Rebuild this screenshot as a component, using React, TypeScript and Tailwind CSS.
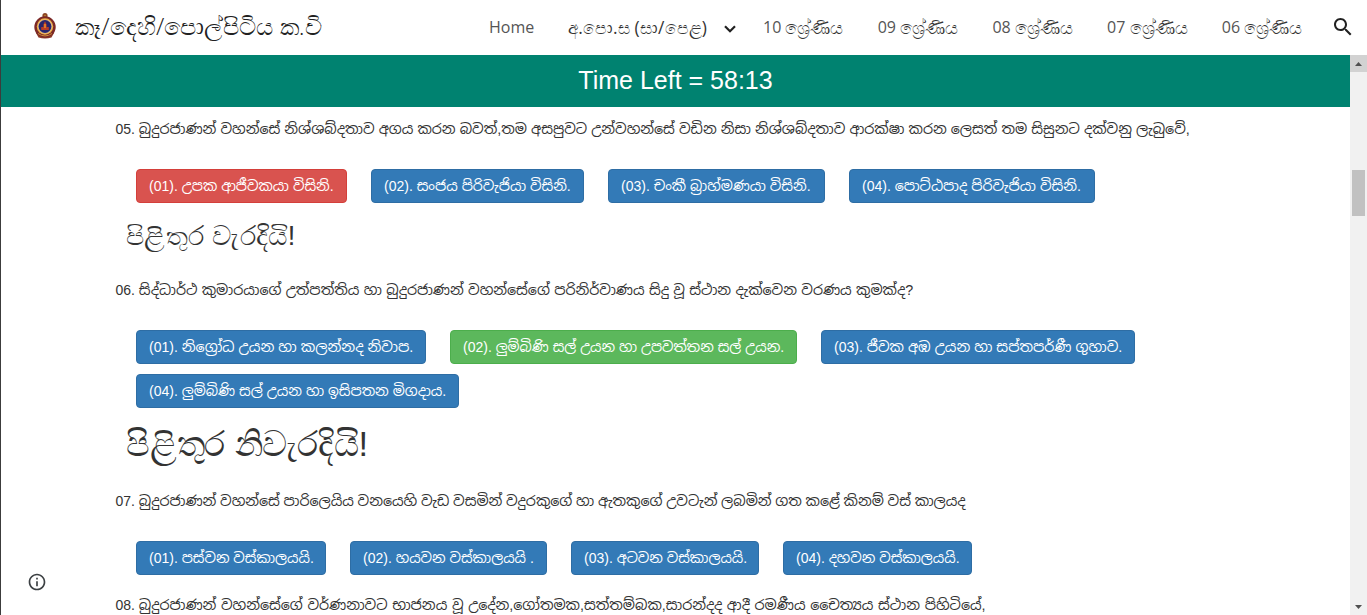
type Tone = "blue" | "red" | "green";

const tones: Record<Tone, string> = {
  blue: "bg-[#337ab7] border-[#2e6da4]",
  red: "bg-[#d9534f] border-[#d43f3a]",
  green: "bg-[#5cb85c] border-[#4cae4c]",
};

const thin = "font-['Liberation_Sans','LKLUG',serif]";

function Option({
  no,
  text,
  width,
  tone = "blue",
  size = "text-[14.2px]",
}: {
  no: string;
  text: string;
  width: string;
  tone?: Tone;
  size?: string;
}) {
  return (
    <button
      className={`${width} ${tones[tone]} flex h-[34px] shrink-0 items-center rounded border pl-3 text-white whitespace-pre`}
    >
      <span className="leading-5">{`(${no}). `}</span>
      <span className={`${size} leading-5`}>{text}</span>
    </button>
  );
}

function Question({ no, text, spacing = "" }: { no: string; text: string; spacing?: string }) {
  return (
    <p className="flex h-5 items-center whitespace-pre pl-[114.5px]">
      <span>{`${no}. `}</span>
      <span className={`${spacing} text-[14.3px] leading-5`}>{text}</span>
    </p>
  );
}

function Emblem() {
  return (
    <svg className="ml-[33px] h-[26px] w-[22px] shrink-0" viewBox="0 0 22 26">
      <circle cx="11" cy="2.7" r="2.6" fill="#8a4526" />
      <circle cx="11" cy="2.7" r="1" fill="#b9802f" />
      <path d="M2 20 L4.5 24.6 Q11 26.4 17.5 24.6 L20 20Z" fill="#8b3a28" />
      <circle cx="11" cy="14" r="10.7" fill="#7c2927" />
      <circle cx="11" cy="13.5" r="8.2" fill="#efb347" />
      <circle cx="11" cy="13.5" r="7" fill="#d9b9a0" />
      <circle cx="11" cy="13.5" r="6.4" fill="#28266b" />
      <path d="M11 8.3 L12.6 11.5 V14 H14.8 V17 H7.2 V14 H9.4 V11.5Z" fill="#b83b25" />
      <path d="M10.2 11h1.6v4h-1.6z" fill="#e58a2e" />
      <path d="M4 20.5 Q11 25.4 18 20.5" fill="none" stroke="#c98a38" strokeWidth="1" />
    </svg>
  );
}

const grades = ["10", "09", "08", "07", "06"];

export default function App() {
  return (
    <div className="flex h-[615px] w-[1367px] flex-col overflow-hidden border-l border-[#3c3c3c] bg-white font-['Liberation_Sans','Noto_Sans_Sinhala',sans-serif] text-[14px] leading-5 text-[#333]">
      <header className="flex h-[55px] shrink-0 items-center whitespace-nowrap">
        <div className="flex w-[488px] items-center pb-1">
          <Emblem />
          <h1 className="ml-[19px] pt-px font-['Open_Sans','LKLUG',serif] text-[24.3px] font-light leading-8 tracking-[0.15px] text-[#212121]">
            කෑ/දෙහි/පොල්පිටිය ක.වි
          </h1>
        </div>
        <nav className="flex items-center pb-px font-['Open_Sans','LKLUG',serif] text-[16px] leading-6 text-[#555]">
          <a className="w-[79px]">Home</a>
          <a className="flex w-[195px] items-center">
            <span className="w-[156px] text-[17.4px] tracking-[0.15px] text-[#333]">අ.පො.ස (සා/පෙළ)</span>
            <svg className="mt-1 h-2 w-3" viewBox="0 0 12 8">
              <path d="M1 1.2 L6 6.2 L11 1.2" fill="none" stroke="#212121" strokeWidth="2.2" />
            </svg>
          </a>
          {grades.map((g) => (
            <a key={g} className="flex w-[114.7px] items-center whitespace-pre">
              <span>{g} </span>
              <span className="text-[17.6px] text-[#333]">{"ශ්\u200dරේණිය"}</span>
            </a>
          ))}
        </nav>
        <svg className="-ml-[5px] -mt-px h-6 w-6 shrink-0" viewBox="0 0 24 24" fill="#212121">
          <path d="M15.5 14h-.79l-.28-.27C15.41 12.59 16 11.11 16 9.5 16 5.91 13.09 3 9.5 3S3 5.91 3 9.5 5.91 16 9.5 16c1.61 0 3.09-.59 4.23-1.57l.27.28v.79l5 4.99L20.49 19l-4.99-5zm-6 0C7.01 14 5 11.99 5 9.5S7.01 5 9.5 5 14 7.01 14 9.5 11.99 14 9.5 14z" />
        </svg>
      </header>

      <div className="flex h-[560px] shrink-0">
        <main className="flex min-w-0 flex-1 flex-col">
          <div className="flex h-[52px] shrink-0 items-center justify-center bg-[#008270] pb-0.5 text-[25px] text-white">
            Time Left = 58:13
          </div>

          <section className="h-[161px] shrink-0 pt-3">
            <Question
              no="05"
              spacing="[word-spacing:0.1px]"
              text="බුදුරජාණන් වහන්සේ නිශ්ශබ්දතාව අගය කරන බවත්,තම අසපුවට උන්වහන්සේ වඩින නිසා නිශ්ශබ්දතාව ආරක්ෂා කරන ලෙසත් තම සිසුනට දක්වනු ලැබුවේ,"
            />
            <div className="mt-[30px] flex gap-6 pl-[135px]">
              <Option no="01" text="උපක ආජීවකයා විසිනි." width="w-[211px]" tone="red" />
              <Option no="02" text="සංජය පිරිවැජියා විසිනි." width="w-[213px]" />
              <Option no="03" text={"චංකී බ්\u200dරාහ්මණයා විසිනි."} width="w-[217px]" />
              <Option no="04" text="පොට්ඨපාද පිරිවැජියා විසිනි." width="w-[246px]" size="text-[14.3px]" />
            </div>
            <h3 className={`${thin} mt-[17px] pl-[125px] text-[27.1px] leading-8 tracking-[0.35px]`}>
              පිළිතුර වැරදියි!
            </h3>
          </section>

          <section className="h-[211px] shrink-0 pt-3">
            <Question
              no="06"
              spacing="[word-spacing:0.35px]"
              text="සිද්ධාර්ථ කුමාරයාගේ උත්පත්තිය හා බුදුරජාණන් වහන්සේගේ පරිනිර්වාණය සිදු වූ ස්ථාන දැක්වෙන වරණය කුමක්ද?"
            />
            <div className="mt-[30px] flex flex-wrap gap-x-6 gap-y-2.5 pl-[135px]">
              <Option no="01" text={"නිග්\u200dරෝධ උයන හා කලන්නද නිවාප."} width="w-[290px]" size="text-[14.4px]" />
              <Option no="02" text="ලුම්බිණි සල් උයන හා උපවත්තන සල් උයන." width="w-[347px]" tone="green" size="text-[14.1px]" />
              <Option no="03" text="ජීවක අඹ උයන හා සප්තපර්ණී ගුහාව." width="w-[314px]" size="text-[14.3px]" />
              <Option no="04" text="ලුම්බිණි සල් උයන හා ඉසිපතන මිගදාය." width="w-[323px]" />
            </div>
            <h2 className={`${thin} mt-4 pl-[125px] text-[34.6px] leading-10 tracking-[-0.2px]`}>
              පිළිතුර නිවැරදියි!
            </h2>
          </section>

          <section className="h-[104px] shrink-0 pt-3">
            <Question
              no="07"
              spacing="[word-spacing:-0.25px]"
              text="බුදුරජාණන් වහන්සේ පාරිලෙයිය වනයෙහි වැඩ වසමින් වදුරකුගේ හා ඇතකුගේ උවටැන් ලබමින් ගත කළේ කිනම් වස් කාලයද"
            />
            <div className="mt-[30px] flex gap-6 pl-[135px]">
              <Option no="01" text="පස්වන වස්කාලයයි." width="w-[190px]" size="text-[14.1px]" />
              <Option no="02" text="හයවන වස්කාලයයි ." width="w-[197px]" size="text-[14.1px]" />
              <Option no="03" text="අටවන වස්කාලයයි." width="w-[188px]" size="text-[14.1px]" />
              <Option no="04" text="දහවන වස්කාලයයි." width="w-[189px]" size="text-[14.1px]" />
            </div>
          </section>

          <section className="relative h-8 shrink-0 pt-3">
            <Question
              no="08"
              spacing="[word-spacing:0.7px]"
              text={"බුදුරජාණන් වහන්සේගේ වර්ණනාවට භාජනය වූ උදේන,ගෝතමක,සත්තම්බක,සාරන්දද ආදී රමණීය චෛත්\u200dයය ස්ථාන පිහිටියේ,"}
            />
            <svg className="absolute -top-[11px] left-[26px] h-5 w-5" viewBox="0 0 24 24" fill="#3c4043">
              <path d="M11 7h2v2h-2zm0 4h2v6h-2zm1-9C6.48 2 2 6.48 2 12s4.48 10 10 10 10-4.48 10-10S17.52 2 12 2zm0 18c-4.41 0-8-3.59-8-8s3.59-8 8-8 8 3.59 8 8-3.59 8-8 8z" />
            </svg>
          </section>
        </main>

        <aside className="flex w-[17px] shrink-0 flex-col items-center bg-[#f1f1f1]">
          <div className="flex h-[17px] w-full items-center justify-center bg-[#d2d2d2]">
            <svg className="h-1 w-[7px]" viewBox="0 0 7 4" fill="#505050">
              <path d="M3.5 0 L7 4 H0Z" />
            </svg>
          </div>
          <div className="mt-[98px] h-[46px] w-[13px] bg-[#c1c1c1]" />
          <div className="mt-auto flex h-[17px] w-full items-center justify-center">
            <svg className="h-1 w-[7px]" viewBox="0 0 7 4" fill="#505050">
              <path d="M0 0 H7 L3.5 4Z" />
            </svg>
          </div>
        </aside>
      </div>
    </div>
  );
}
